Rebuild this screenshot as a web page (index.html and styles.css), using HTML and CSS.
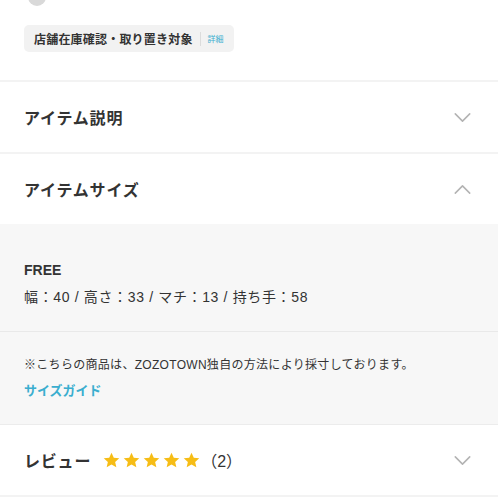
FILE: index.html
```html
<!DOCTYPE html>
<html lang="ja">
<head>
<meta charset="utf-8">
<link rel="stylesheet" href="styles.css">
</head>
<body>
<div class="page">
  <div class="top">
    <div class="avatar-clip"><span class="avatar"></span></div>
    <div class="badge">
      <span class="badge-text">店舗在庫確認・取り置き対象</span>
      <span class="badge-sep"></span>
      <span class="badge-link">詳細</span>
    </div>
  </div>

  <div class="row">
    <span class="row-title">アイテム説明</span>
    <svg class="chev" viewBox="0 0 18 10" width="17" height="9"><path d="M1 1 L9 9 L17 1" fill="none" stroke="#b3b3b3" stroke-width="1.7" stroke-linecap="round" stroke-linejoin="round"/></svg>
  </div>

  <div class="row row-open">
    <span class="row-title">アイテムサイズ</span>
    <svg class="chev" viewBox="0 0 18 10" width="17" height="9"><path d="M1 9 L9 1 L17 9" fill="none" stroke="#b3b3b3" stroke-width="1.7" stroke-linecap="round" stroke-linejoin="round"/></svg>
  </div>

  <div class="size-panel">
    <div class="size-main">
      <div class="size-name">FREE</div>
      <div class="size-dims">幅：40 / 高さ：33 / マチ：13 / 持ち手：58</div>
    </div>
    <div class="size-note">
      <div class="note-text">※こちらの商品は、ZOZOTOWN独自の方法により採寸しております。</div>
      <div class="guide-link">サイズガイド</div>
    </div>
  </div>

  <div class="row">
    <div class="review">
      <span class="row-title">レビュー</span>
      <span class="stars">
        <svg viewBox="0 0 24 24" width="19" height="19"><path d="M12 2.2l2.9 6.3 6.9.7-5.2 4.6 1.5 6.8L12 17.1l-6.1 3.5 1.5-6.8-5.2-4.6 6.9-.7z" fill="#f6bd16"/></svg>
        <svg viewBox="0 0 24 24" width="19" height="19"><path d="M12 2.2l2.9 6.3 6.9.7-5.2 4.6 1.5 6.8L12 17.1l-6.1 3.5 1.5-6.8-5.2-4.6 6.9-.7z" fill="#f6bd16"/></svg>
        <svg viewBox="0 0 24 24" width="19" height="19"><path d="M12 2.2l2.9 6.3 6.9.7-5.2 4.6 1.5 6.8L12 17.1l-6.1 3.5 1.5-6.8-5.2-4.6 6.9-.7z" fill="#f6bd16"/></svg>
        <svg viewBox="0 0 24 24" width="19" height="19"><path d="M12 2.2l2.9 6.3 6.9.7-5.2 4.6 1.5 6.8L12 17.1l-6.1 3.5 1.5-6.8-5.2-4.6 6.9-.7z" fill="#f6bd16"/></svg>
        <svg viewBox="0 0 24 24" width="19" height="19"><path d="M12 2.2l2.9 6.3 6.9.7-5.2 4.6 1.5 6.8L12 17.1l-6.1 3.5 1.5-6.8-5.2-4.6 6.9-.7z" fill="#f6bd16"/></svg>
      </span>
      <span class="count">（2）</span>
    </div>
    <svg class="chev" viewBox="0 0 18 10" width="17" height="9"><path d="M1 1 L9 9 L17 1" fill="none" stroke="#b3b3b3" stroke-width="1.7" stroke-linecap="round" stroke-linejoin="round"/></svg>
  </div>
</div>
</body>
</html>
```

FILE: styles.css
```css
* { box-sizing: border-box; }
html, body { margin: 0; padding: 0; background: #fff; }
body {
  font-family: "Liberation Sans", "Noto Sans CJK JP", sans-serif;
  color: #333;
  width: 498px;
  overflow: hidden;
}
.page { display: flex; flex-direction: column; }

.top {
  height: 82px;
  padding: 0 24px;
  border-bottom: 2px solid #f3f3f3;
  display: flex;
  flex-direction: column;
  align-items: flex-start;
}
.avatar-clip {
  height: 6px;
  overflow: hidden;
  margin-left: 4px;
}
.avatar {
  display: block;
  width: 18px;
  height: 18px;
  border-radius: 50%;
  background: #d9d9d9;
  margin-top: -12px;
}
.badge {
  margin-top: 19px;
  height: 27px;
  background: #f2f2f2;
  border-radius: 5px;
  padding: 0 10px;
  display: flex;
  align-items: center;
}
.badge-text {
  font-size: 12px;
  font-weight: 700;
  color: #333;
  letter-spacing: 0.2px;
}
.badge-sep {
  width: 1px;
  height: 14px;
  background: #dcdcdc;
  margin: 0 7px 0 7px;
}
.badge-link {
  font-size: 8px;
  color: #3aaecf;
}

.row {
  height: 72px;
  padding: 0 27px 0 24px;
  border-bottom: 2px solid #f3f3f3;
  display: flex;
  align-items: center;
  justify-content: space-between;
}
.row-open { border-bottom: none; height: 70px; }
.row-title {
  font-size: 16px;
  font-weight: 700;
  color: #333;
  letter-spacing: 0.8px;
}
.chev { display: block; }

.size-panel {
  background: #f7f7f7;
  border-bottom: 1px solid #ececec;
}
.size-main {
  padding: 36px 24px 24px;
  border-bottom: 1px solid #e9e9e9;
  display: flex;
  flex-direction: column;
  gap: 7px;
}
.size-name {
  font-size: 14px;
  font-weight: 700;
  line-height: 20px;
}
.size-dims {
  font-size: 14px;
  line-height: 20px;
  color: #333;
  letter-spacing: 0.65px;
}
.size-note {
  padding: 24px 24px 24px;
  display: flex;
  flex-direction: column;
  gap: 8px;
}
.note-text {
  font-size: 12px;
  line-height: 18px;
  color: #333;
  letter-spacing: 0.3px;
}
.guide-link {
  font-size: 13px;
  font-weight: 700;
  line-height: 18px;
  color: #3aaecf;
}

.review {
  display: flex;
  align-items: center;
}
.stars {
  display: flex;
  gap: 1px;
  margin-left: 11px;
}
.stars svg { display: block; }
.count {
  font-size: 16px;
  color: #333;
  margin-left: 0;
}
```
